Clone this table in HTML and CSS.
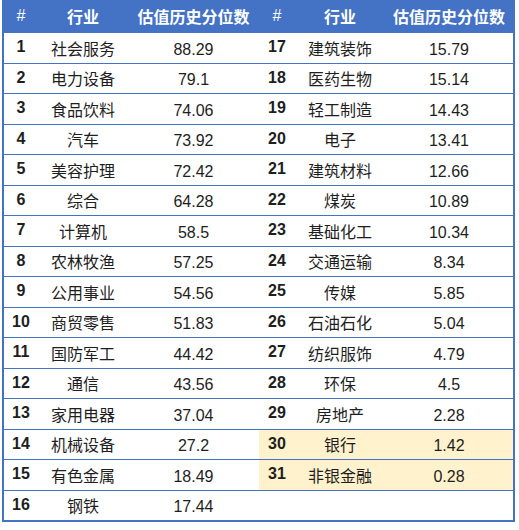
FILE: index.html
```html
<!DOCTYPE html>
<html lang="zh">
<head>
<meta charset="utf-8">
<link rel="stylesheet" href="styles.css">
</head>
<body>
<div class="sheet">
  <div class="row head">
    <div class="c num">#</div><div class="c name">行业</div><div class="c val">估值历史分位数</div>
    <div class="c num">#</div><div class="c name">行业</div><div class="c val">估值历史分位数</div>
  </div>
  <div class="row"><div class="c num">1</div><div class="c name">社会服务</div><div class="c val">88.29</div><div class="c num">17</div><div class="c name">建筑装饰</div><div class="c val">15.79</div></div>
  <div class="row"><div class="c num">2</div><div class="c name">电力设备</div><div class="c val">79.1</div><div class="c num">18</div><div class="c name">医药生物</div><div class="c val">15.14</div></div>
  <div class="row"><div class="c num">3</div><div class="c name">食品饮料</div><div class="c val">74.06</div><div class="c num">19</div><div class="c name">轻工制造</div><div class="c val">14.43</div></div>
  <div class="row"><div class="c num">4</div><div class="c name">汽车</div><div class="c val">73.92</div><div class="c num">20</div><div class="c name">电子</div><div class="c val">13.41</div></div>
  <div class="row"><div class="c num">5</div><div class="c name">美容护理</div><div class="c val">72.42</div><div class="c num">21</div><div class="c name">建筑材料</div><div class="c val">12.66</div></div>
  <div class="row"><div class="c num">6</div><div class="c name">综合</div><div class="c val">64.28</div><div class="c num">22</div><div class="c name">煤炭</div><div class="c val">10.89</div></div>
  <div class="row"><div class="c num">7</div><div class="c name">计算机</div><div class="c val">58.5</div><div class="c num">23</div><div class="c name">基础化工</div><div class="c val">10.34</div></div>
  <div class="row"><div class="c num">8</div><div class="c name">农林牧渔</div><div class="c val">57.25</div><div class="c num">24</div><div class="c name">交通运输</div><div class="c val">8.34</div></div>
  <div class="row"><div class="c num">9</div><div class="c name">公用事业</div><div class="c val">54.56</div><div class="c num">25</div><div class="c name">传媒</div><div class="c val">5.85</div></div>
  <div class="row"><div class="c num">10</div><div class="c name">商贸零售</div><div class="c val">51.83</div><div class="c num">26</div><div class="c name">石油石化</div><div class="c val">5.04</div></div>
  <div class="row"><div class="c num">11</div><div class="c name">国防军工</div><div class="c val">44.42</div><div class="c num">27</div><div class="c name">纺织服饰</div><div class="c val">4.79</div></div>
  <div class="row"><div class="c num">12</div><div class="c name">通信</div><div class="c val">43.56</div><div class="c num">28</div><div class="c name">环保</div><div class="c val">4.5</div></div>
  <div class="row"><div class="c num">13</div><div class="c name">家用电器</div><div class="c val">37.04</div><div class="c num">29</div><div class="c name">房地产</div><div class="c val">2.28</div></div>
  <div class="row"><div class="c num">14</div><div class="c name">机械设备</div><div class="c val">27.2</div><div class="c num hl">30</div><div class="c name hl">银行</div><div class="c val hl">1.42</div></div>
  <div class="row"><div class="c num">15</div><div class="c name">有色金属</div><div class="c val">18.49</div><div class="c num hl">31</div><div class="c name hl">非银金融</div><div class="c val hl">0.28</div></div>
  <div class="row last"><div class="c num">16</div><div class="c name">钢铁</div><div class="c val">17.44</div><div class="c num"></div><div class="c name"></div><div class="c val"></div></div>
</div>
</body>
</html>
```
FILE: styles.css
```css
html, body {
  margin: 0;
  padding: 0;
  background: #ffffff;
}
body {
  font-family: "Liberation Sans", "Noto Sans CJK SC", sans-serif;
  font-size: 16px;
  color: #1e1e1e;
}
.sheet {
  margin-left: 2px;
  width: 509px;
  height: 520px;
  border-left: 2px solid #4472c4;
  border-right: 2px solid #4472c4;
  border-bottom: 2px solid #4472c4;
  display: flex;
  flex-direction: column;
}
.row {
  flex: 1;
  display: grid;
  grid-template-columns: 34px 90px 131px 36px 90px 1fr;
  border-bottom: 1px solid #4472c4;
}
.row.last {
  border-bottom: none;
}
.row.head {
  flex: 0 0 33px;
  background: #4472c4;
  color: #ffffff;
  font-weight: bold;
  border-bottom: none;
}
.c {
  display: flex;
  align-items: center;
  justify-content: center;
  padding-top: 4px;
  line-height: 1;
}
.row .num {
  font-weight: bold;
  padding-top: 0;
  padding-bottom: 1px;
}
.row.head .c {
  padding-top: 2px;
  padding-bottom: 0;
}
.row.head .num {
  font-weight: normal;
  padding-bottom: 2px;
  padding-top: 0;
}
.hl {
  background: #fff2cc;
}
```
